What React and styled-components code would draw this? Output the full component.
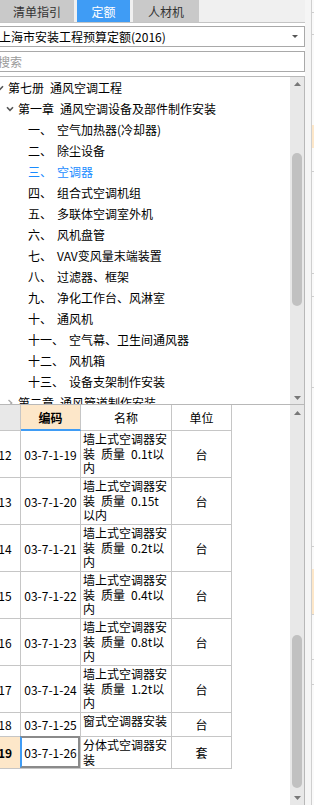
import React from 'react';
import styled, { createGlobalStyle } from 'styled-components';

const FONT = `"Noto Sans CJK SC", "Noto Sans", sans-serif`;

const Global = createGlobalStyle`
  html, body { margin: 0; padding: 0; background: #f3f3f3; }
  body { font-family: ${FONT}; font-size: 12px; color: #000; overflow: hidden; }
  * { box-sizing: border-box; }
`;

const Root = styled.div`
  display: flex;
  width: 314px;
  height: 805px;
  overflow: hidden;
`;

const Main = styled.div`
  width: 305px;
  flex: none;
  display: flex;
  flex-direction: column;
  overflow: hidden;
`;

const TabBar = styled.div`
  height: 23px;
  flex: none;
  display: flex;
  gap: 3px;
  background: #f0f0f0;
  border-bottom: 1px solid #c4c4c4;
`;

const Tab = styled.div`
  width: ${p => p.$w}px;
  height: 22px;
  display: flex;
  align-items: center;
  justify-content: center;
  font-size: 12px;
  background: ${p => (p.$active ? '#3f9cf5' : '#c9c9c9')};
  color: ${p => (p.$active ? '#fff' : '#333')};
`;

const Panel = styled.div`
  flex: 1;
  min-height: 0;
  display: flex;
  flex-direction: column;
  background: #fff;
  margin-left: -10px;
`;

const Select = styled.div`
  margin-top: 3px;
  height: 21px;
  flex: none;
  border: 1px solid #a9a9a9;
  display: flex;
  align-items: center;
  justify-content: space-between;
  padding: 0 6px 0 8px;
  white-space: nowrap;
`;

const Search = styled.div`
  margin-top: 4px;
  height: 21px;
  flex: none;
  border: 1px solid #a9a9a9;
  display: flex;
  align-items: center;
  padding-left: 7px;
  color: #9a9a9a;
`;

const TreeBox = styled.div`
  margin-top: 4px;
  height: 329px;
  flex: none;
  border: 1px solid #b8b8b8;
  display: flex;
`;

const TreeList = styled.div`
  flex: 1;
  overflow: hidden;
`;

const TreeRow = styled.div`
  height: 21px;
  display: flex;
  align-items: center;
  white-space: pre;
  padding-left: ${p => 5 + p.$level * 10 + (p.$leaf ? 12 : 0)}px;
  color: ${p => (p.$selected ? '#1a8cff' : '#000')};
`;

const Chevron = styled.svg`
  width: 8px;
  height: 8px;
  margin-right: 4px;
  flex: none;
`;

const Num = styled.span`
  margin-right: 5px;
`;

const ScrollBar = styled.div`
  width: 14px;
  flex: none;
  background: #e8e8e8;
  display: flex;
  flex-direction: column;
`;

const Arrow = styled.div`
  height: ${p => p.$h}px;
  flex: none;
  display: flex;
  align-items: center;
  justify-content: center;
`;

const Track = styled.div`
  flex: 1;
  display: flex;
  flex-direction: column;
  align-items: center;
`;

const Thumb = styled.div`
  width: 10px;
  margin-top: ${p => p.$top}px;
  height: ${p => p.$h}px;
  border-radius: 5px;
  background: #c1c1c1;
`;

const TableSection = styled.div`
  flex: 1;
  min-height: 0;
  display: flex;
  border-right: 1px solid #b8b8b8;
`;

const TableArea = styled.div`
  flex: 1;
  overflow: hidden;
`;

const Grid = styled.div`
  display: grid;
  grid-template-columns: 31px 60px 91px 60px;
  align-content: start;
`;

const Cell = styled.div`
  border-right: 1px solid #c6c6c6;
  border-bottom: 1px solid #c6c6c6;
  display: flex;
  align-items: center;
  justify-content: center;
  white-space: pre;
  min-height: 24px;
  position: relative;
  background: ${p => p.$bg || '#fff'};
  font-weight: ${p => (p.$bold ? 700 : 400)};
`;

const HeadCell = styled(Cell)`
  height: 26px;
  ${p => (p.$active ? 'border-bottom: 2px solid #3f9cf5;' : '')}
`;

const NameCell = styled(Cell)`
  flex-direction: column;
  align-items: flex-start;
  justify-content: flex-start;
  padding: 1px 2px;
  line-height: 14.67px;
`;

const SelCell = styled(Cell)`
  &::after {
    content: '';
    position: absolute;
    top: -1px;
    left: -1px;
    right: 0;
    bottom: 0;
    border: 2px solid #8a8a8a;
    border-left-color: #3f9cf5;
  }
`;

const Side = styled.div`
  width: 9px;
  flex: none;
  display: flex;
  background: #f5f5f5;
`;

const SideGap = styled.div`
  width: 6px;
  flex: none;
`;

const SideRail = styled.div`
  flex: 1;
  border-left: 1px solid #cfcfcf;
  display: flex;
  flex-direction: column;
  background: #fafafa;
`;

const SideMark = styled.div`
  height: ${p => p.$h}px;
  flex: none;
  background: ${p => p.$bg || 'transparent'};
  border-bottom: ${p => (p.$line ? '1px solid #cfcfcf' : 'none')};
`;

const Down = ({ color = '#555' }) => (
  <Chevron viewBox="0 0 8 8">
    <path d="M1 2.2 L4 5.4 L7 2.2" fill="none" stroke={color} strokeWidth="1.6" />
  </Chevron>
);

const Right = ({ color = '#aaa' }) => (
  <Chevron viewBox="0 0 8 8">
    <path d="M2.5 1 L5.7 4 L2.5 7" fill="none" stroke={color} strokeWidth="1.4" />
  </Chevron>
);

const Tri = ({ up, w = 7, h = 4, color = '#777' }) => (
  <svg width={w} height={h} viewBox={`0 0 ${w} ${h}`}>
    <polygon
      points={up ? `0,${h} ${w / 2},0 ${w},${h}` : `0,0 ${w},0 ${w / 2},${h}`}
      fill={color}
    />
  </svg>
);

const SP = '\u2002';

const items = [
  ['一、', '空气加热器(冷却器)'],
  ['二、', '除尘设备'],
  ['三、', '空调器', true],
  ['四、', '组合式空调机组'],
  ['五、', '多联体空调室外机'],
  ['六、', '风机盘管'],
  ['七、', 'VAV变风量末端装置'],
  ['八、', '过滤器、框架'],
  ['九、', '净化工作台、风淋室'],
  ['十、', '通风机'],
  ['十一、', '空气幕、卫生间通风器'],
  ['十二、', '风机箱'],
  ['十三、', '设备支架制作安装'],
];

const wall = w => ['墙上式空调器安', `装${SP}质量${SP}${w}t以`, '内'];
const rows = [
  { n: 12, code: '03-7-1-19', name: wall('0.1'), unit: '台' },
  { n: 13, code: '03-7-1-20', name: ['墙上式空调器安', `装${SP}质量${SP}0.15t`, '以内'], unit: '台' },
  { n: 14, code: '03-7-1-21', name: wall('0.2'), unit: '台' },
  { n: 15, code: '03-7-1-22', name: wall('0.4'), unit: '台' },
  { n: 16, code: '03-7-1-23', name: wall('0.8'), unit: '台' },
  { n: 17, code: '03-7-1-24', name: wall('1.2'), unit: '台' },
  { n: 18, code: '03-7-1-25', name: ['窗式空调器安装'], unit: '台' },
  { n: 19, code: '03-7-1-26', name: ['分体式空调器安', '装'], unit: '套', sel: true },
];

const sideMarks = [
  { h: 13, line: true },
  { h: 22, line: true },
  { h: 90 },
  { h: 23, bg: '#fde7c9' },
  { h: 24, line: true },
  { h: 102, line: true },
  { h: 23, line: true },
  { h: 91, line: true },
  { h: 159, line: true },
  { h: 22 },
  { h: 46, bg: '#fde7c9', line: true },
  { h: 45, line: true },
  { h: 25, line: true },
];

export default function App() {
  return (
    <>
      <Global />
      <Root>
        <Main>
          <TabBar>
            <Tab $w={74}>清单指引</Tab>
            <Tab $w={53} $active>定额</Tab>
            <Tab $w={66}>人材机</Tab>
          </TabBar>
          <Panel>
            <Select>
              <span>上海市安装工程预算定额(2016)</span>
              <Tri w={6} h={3} color="#555" />
            </Select>
            <Search>搜索</Search>
            <TreeBox>
              <TreeList>
                <TreeRow $level={0}>
                  <Down />
                  {`第七册${SP}通风空调工程`}
                </TreeRow>
                <TreeRow $level={1}>
                  <Down />
                  {`第一章${SP}通风空调设备及部件制作安装`}
                </TreeRow>
                {items.map(([num, label, sel]) => (
                  <TreeRow key={num} $level={2} $leaf $selected={sel}>
                    <Num>{num}</Num>
                    {label}
                  </TreeRow>
                ))}
                <TreeRow $level={1}>
                  <Right />
                  {`第二章${SP}通风管道制作安装`}
                </TreeRow>
              </TreeList>
              <ScrollBar>
                <Arrow $h={13}><Tri up /></Arrow>
                <Track><Thumb $top={63} $h={153} /></Track>
                <Arrow $h={13}><Tri /></Arrow>
              </ScrollBar>
            </TreeBox>
            <TableSection>
              <TableArea>
                <Grid>
                  <HeadCell $bg="#e8e8e8" />
                  <HeadCell $bg="#fde7c9" $bold $active>编码</HeadCell>
                  <HeadCell>名称</HeadCell>
                  <HeadCell>单位</HeadCell>
                  {rows.map(r => {
                    const CodeCell = r.sel ? SelCell : Cell;
                    return (
                      <React.Fragment key={r.n}>
                        <Cell $bg={r.sel ? '#fde7c9' : undefined} $bold={r.sel}>{r.n}</Cell>
                        <CodeCell>{r.code}</CodeCell>
                        <NameCell>
                          {r.name.map((l, i) => (
                            <span key={i}>{l}</span>
                          ))}
                        </NameCell>
                        <Cell>{r.unit}</Cell>
                      </React.Fragment>
                    );
                  })}
                </Grid>
              </TableArea>
              <ScrollBar>
                <Arrow $h={16}><Tri up /></Arrow>
                <Track><Thumb $top={214} $h={153} /></Track>
                <Arrow $h={14}><Tri /></Arrow>
              </ScrollBar>
            </TableSection>
          </Panel>
        </Main>
        <Side>
          <SideGap />
          <SideRail>
            {sideMarks.map((m, i) => (
              <SideMark key={i} $h={m.h} $bg={m.bg} $line={m.line} />
            ))}
          </SideRail>
        </Side>
      </Root>
    </>
  );
}
